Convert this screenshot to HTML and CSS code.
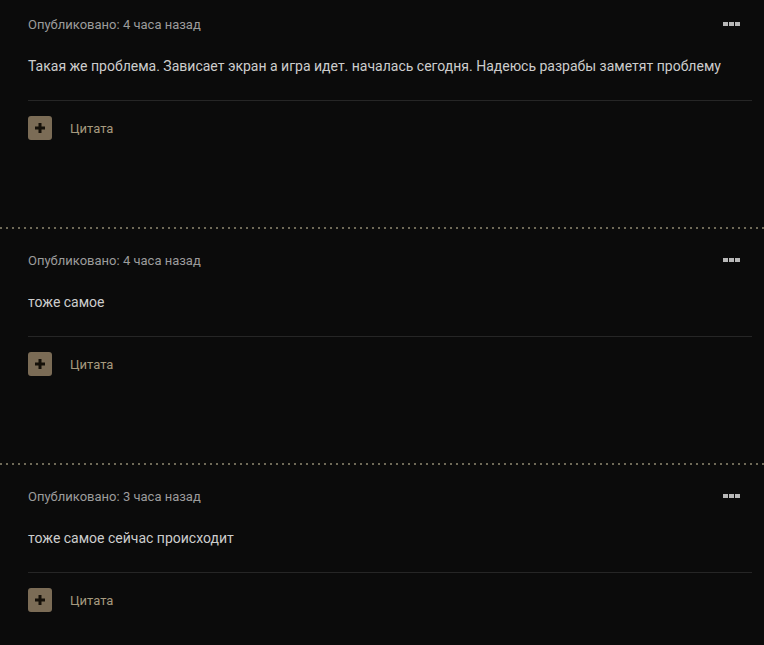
FILE: index.html
```html
<!DOCTYPE html>
<html>
<head>
    <meta charset="UTF-8">
    <meta name="viewport" content="width=device-width, initial-scale=1.0">
    <title>Комментарии</title>
    <link rel="stylesheet" href="styles.css">
</head>
<body>
    <div class="comments">
        <div class="post">
            <div class="post-head">
                <span class="post-date">Опубликовано: 4 часа назад</span>
                <span class="post-menu"><i></i><i></i><i></i></span>
            </div>
            <div class="post-text">Такая же проблема. Зависает экран а игра идет. началась сегодня. Надеюсь разрабы заметят проблему</div>
            <div class="post-actions">
                <span class="quote-btn"></span>
                <span class="quote-label">Цитата</span>
            </div>
        </div>

        <div class="post">
            <div class="post-head">
                <span class="post-date">Опубликовано: 4 часа назад</span>
                <span class="post-menu"><i></i><i></i><i></i></span>
            </div>
            <div class="post-text">тоже самое</div>
            <div class="post-actions">
                <span class="quote-btn"></span>
                <span class="quote-label">Цитата</span>
            </div>
        </div>

        <div class="post">
            <div class="post-head">
                <span class="post-date">Опубликовано: 3 часа назад</span>
                <span class="post-menu"><i></i><i></i><i></i></span>
            </div>
            <div class="post-text">тоже самое сейчас происходит</div>
            <div class="post-actions">
                <span class="quote-btn"></span>
                <span class="quote-label">Цитата</span>
            </div>
        </div>
    </div>
</body>
</html>
```

FILE: styles.css
```css
body {
    margin: 0;
    background-color: #0b0b0b;
    font-family: Roboto, "Noto Sans", sans-serif;
    overflow: hidden;
}

.post {
    padding: 23px 12px 87px 28px;
    background-image: linear-gradient(to right, #6f6a58 2px, transparent 2px);
    background-size: 6px 2px;
    background-repeat: repeat-x;
}

.post:first-child {
    background-image: none;
    padding-top: 14px;
}

.post-head {
    display: flex;
    justify-content: space-between;
    align-items: center;
    height: 20px;
}

.post-date {
    font-size: 13px;
    color: #9c9c9c;
}

.post-menu {
    display: flex;
    gap: 1px;
    margin-right: 12px;
}

.post-menu i {
    width: 5px;
    height: 4px;
    background-color: #b8b8b8;
}

.post-text {
    margin-top: 22px;
    font-size: 14px;
    line-height: 20px;
    color: #cdcdcd;
    padding-bottom: 24px;
    border-bottom: 1px solid #262626;
}

.post-actions {
    display: flex;
    align-items: center;
    gap: 18px;
    margin-top: 15px;
}

.quote-btn {
    position: relative;
    width: 24px;
    height: 24px;
    border-radius: 3px;
    background-color: #7b6c56;
}

.quote-btn::before,
.quote-btn::after {
    content: "";
    position: absolute;
    left: 50%;
    top: 50%;
    background-color: #151009;
    transform: translate(-50%, -50%);
}

.quote-btn::before {
    width: 10px;
    height: 3px;
}

.quote-btn::after {
    width: 3px;
    height: 10px;
}

.quote-label {
    font-size: 13px;
    color: #a69a7e;
}
```
